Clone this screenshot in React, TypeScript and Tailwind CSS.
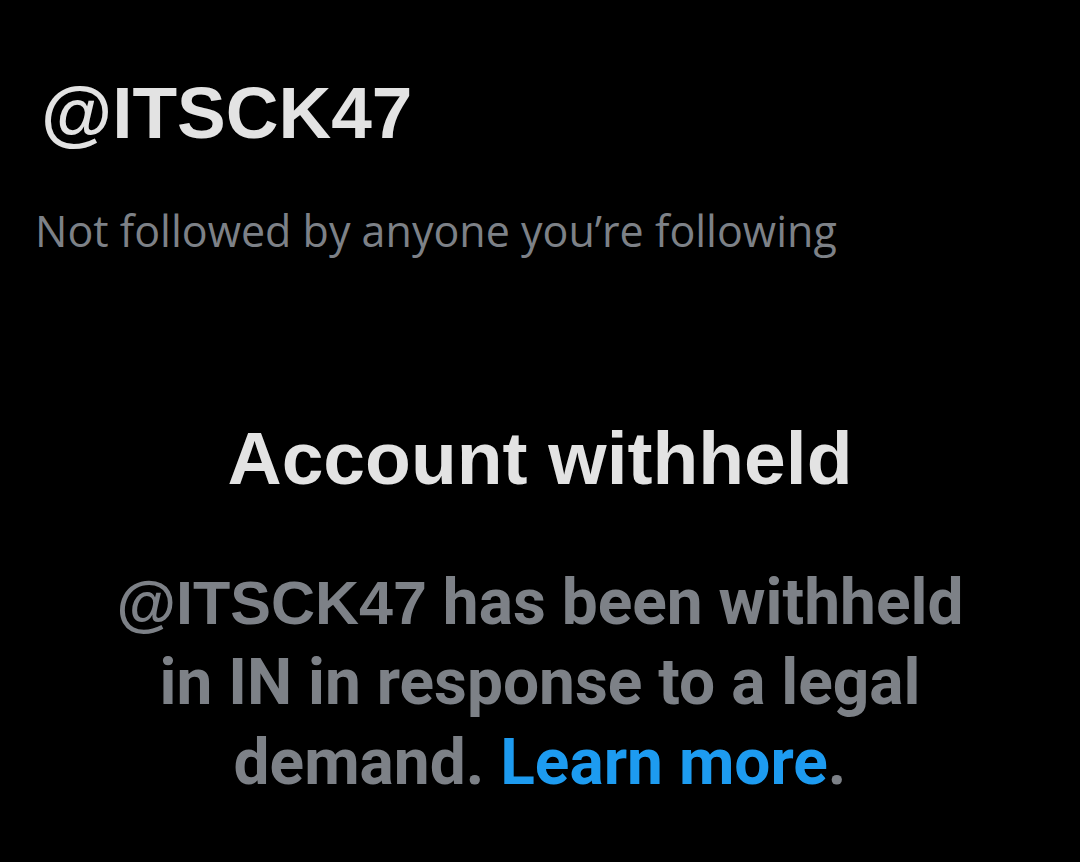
export default function App() {
  return (
    <div className="w-full h-[862px] bg-black overflow-hidden flex flex-col">
      {/* Handle */}
      <h1 className="mt-[76px] ml-[41px] font-['Liberation_Sans',Arial,sans-serif] text-[73px] leading-none font-bold text-[#e3e3e3]">
        @ITSCK47
      </h1>

      <p className="mt-[60px] ml-[35px] font-['Open_Sans','Noto_Sans',sans-serif] text-[43px] leading-none text-[#7d8187]">
        Not followed by anyone you’re following
      </p>

      {/* Withheld notice */}
      <div className="flex flex-col items-center text-center">
        <h2 className="mt-[169px] font-['Liberation_Sans',Arial,sans-serif] text-[75px] leading-none font-bold text-[#e3e3e3]">
          Account withheld
        </h2>
        <p className="mt-[67px] font-[Roboto,sans-serif] text-[64px] leading-[80px] font-bold text-[#7d8187]">
          <span className="font-['Liberation_Sans',Arial,sans-serif] text-[61px]">
            @ITSCK47
          </span>{" "}
          has been withheld
          <br />
          in IN in response to a legal
          <br />
          demand. <span className="text-[#1d9bf0]">Learn more</span>.
        </p>
      </div>
    </div>
  );
}
